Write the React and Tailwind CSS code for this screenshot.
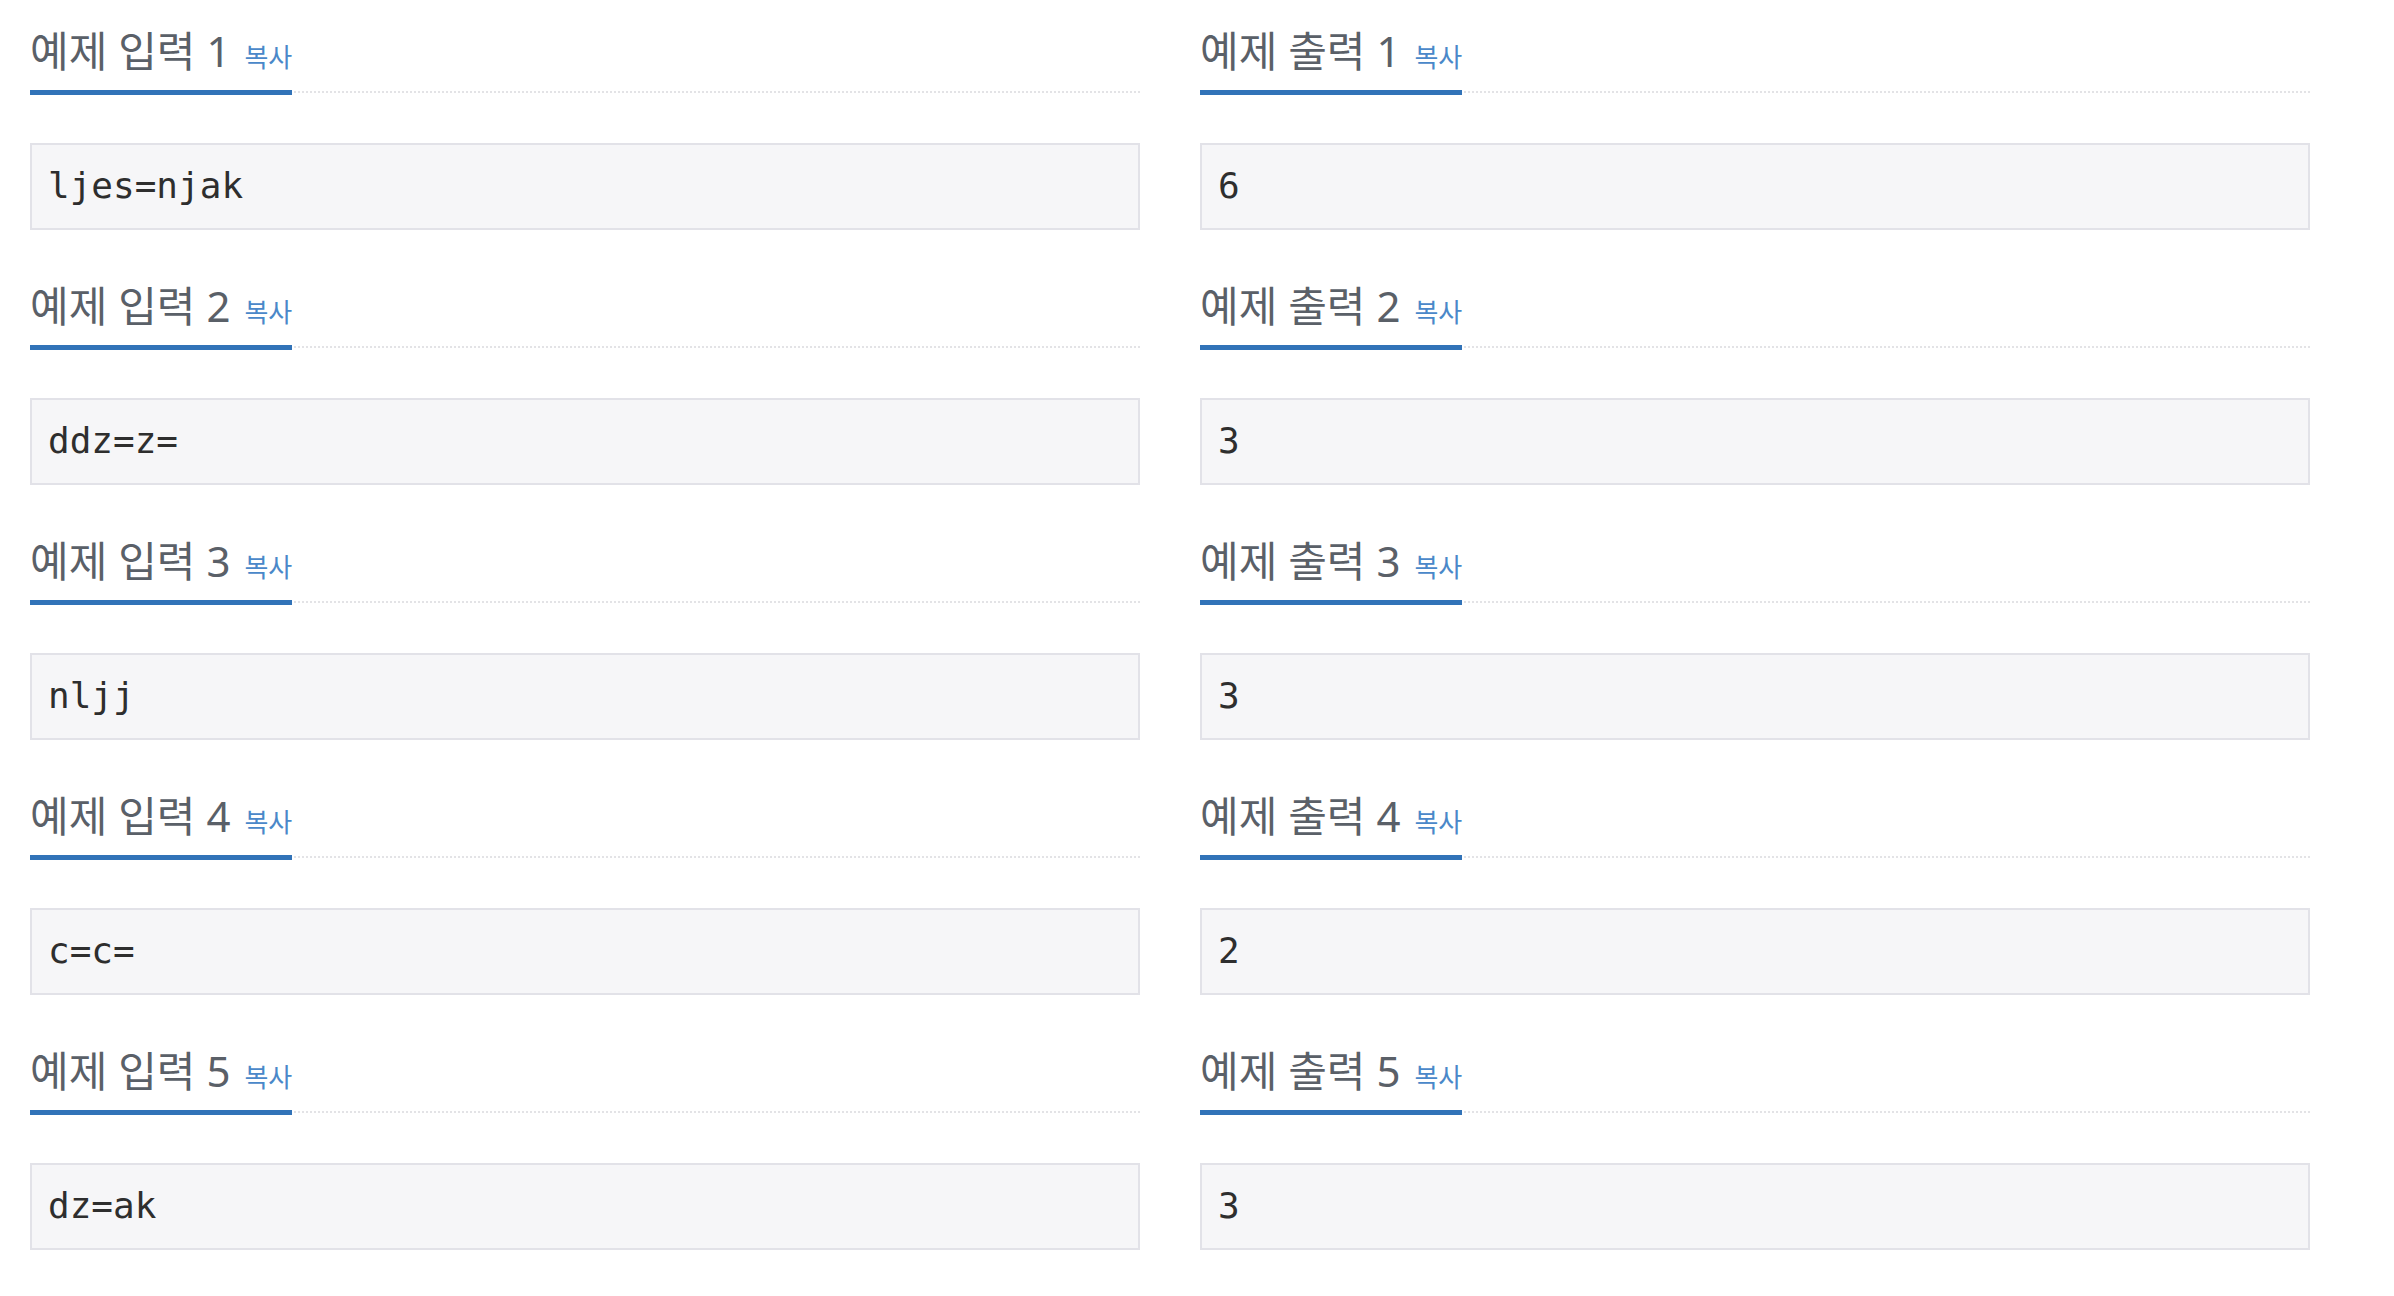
const samples = [
  { input: 'ljes=njak', output: '6' },
  { input: 'ddz=z=', output: '3' },
  { input: 'nljj', output: '3' },
  { input: 'c=c=', output: '2' },
  { input: 'dz=ak', output: '3' },
];

const SampleBlock = ({ title, data }) => (
  <div>
    <div className="flex items-end border-b-2 border-dotted border-[#e3e3e6]">
      <span className="flex items-baseline pt-[27px] pb-[15px] border-b-[5px] border-[#3173b8] -mb-[4px]">
        <span className="text-[42px] leading-[48px] text-[#5a6068]">{title}</span>
        <span className="ml-[14px] text-[26px] leading-[30px] text-[#4a88c9]">복사</span>
      </span>
    </div>
    <pre className="mt-[50px] border-2 border-[#e2e2e8] bg-[#f6f6f8] pl-[16px] pt-[20px] pb-[21px] text-[36px] leading-[42px] text-[#2e2e2e] font-['DejaVu_Sans_Mono',monospace]">
      {data}
    </pre>
  </div>
);

export default function App() {
  return (
    <div className="min-h-screen bg-white px-[30px] font-['Noto_Sans','Noto_Sans_CJK_KR',sans-serif]">
      <div className="flex w-[2280px] flex-col gap-[25px]">
        {samples.map((s, i) => (
          <div key={i} className="grid grid-cols-2 gap-x-[60px]">
            <SampleBlock title={`예제 입력 ${i + 1}`} data={s.input} />
            <SampleBlock title={`예제 출력 ${i + 1}`} data={s.output} />
          </div>
        ))}
      </div>
    </div>
  );
}
